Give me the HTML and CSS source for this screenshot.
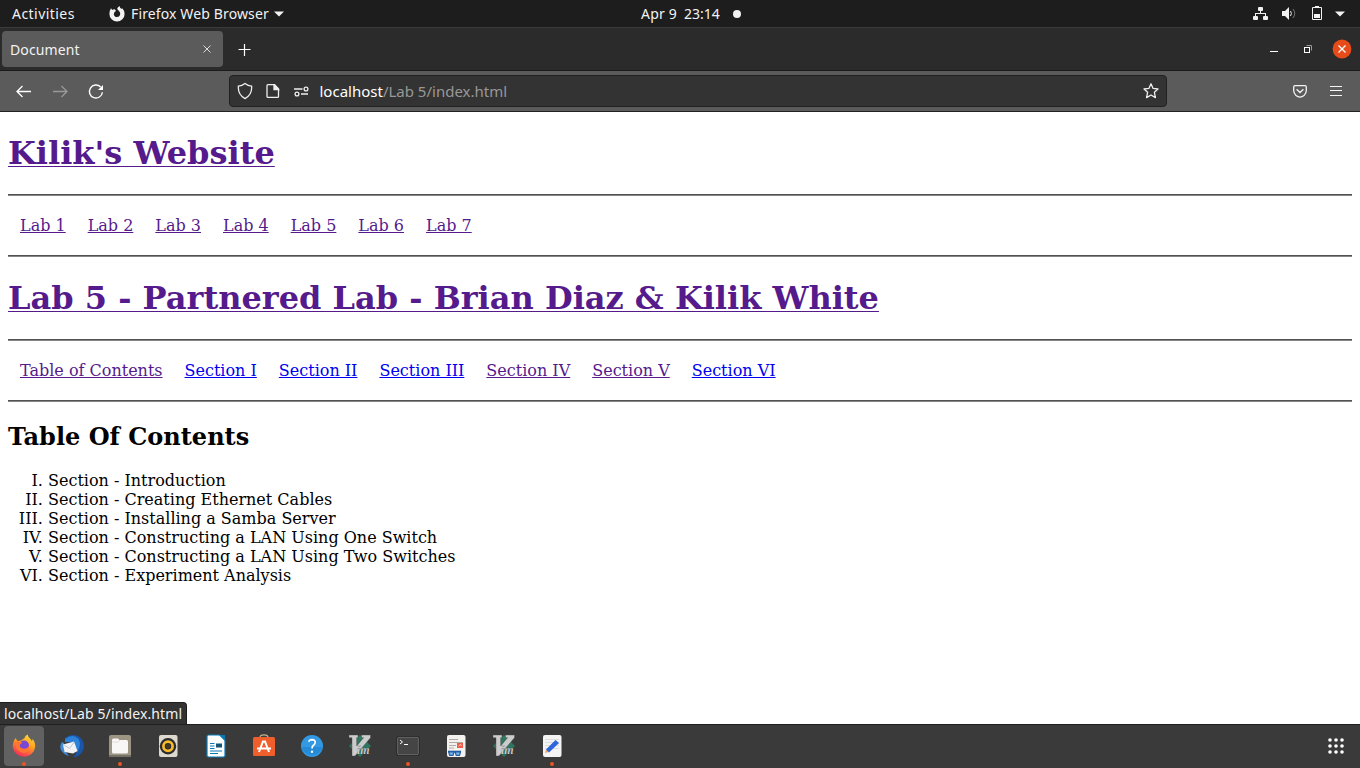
FILE: index.html
```html
<!DOCTYPE html>
<html lang="en">
<head>
<meta charset="utf-8">
<title>Document</title>
<link rel="stylesheet" href="styles.css">
</head>
<body>
<header class="topbar">
  <div class="top-left">
    <span class="activities">Activities</span>
    <svg class="fx-mono" width="16" height="16" viewBox="0 0 16 16"><path d="M2 2.2 3.2 4Q4.6 2.9 6 3.4L7 5 5.5 6 4.8 8.2Q5.2 11 8 11 11.2 10.8 11.2 7.5 11 5.6 9.3 4.2L8.2 3 8.6 1.8 10.5 0Q11 2 12.2 2.8L13.5 2.5Q15.6 4.6 15.6 8A7.6 7.6 0 0 1 .4 8Q.4 4.5 2 2.2Z" fill="#f2f2f2"/></svg>
    <span class="appname">Firefox Web Browser</span>
    <svg width="10" height="6" viewBox="0 0 10 6"><path d="M0 .5H10L5 5.5Z" fill="#f2f2f2"/></svg>
  </div>
  <div class="clock"><span class="date">Apr 9</span><span class="time">23:14</span><i class="notice"></i></div>
  <svg class="tray" width="96" height="18" viewBox="0 0 96 18"><g fill="#f2f2f2"><rect x="6" y="2" width="5" height="4" rx="1"/><rect x="1" y="11" width="5" height="4" rx="1"/><rect x="11" y="11" width="5" height="4" rx="1"/><path d="M8 6H9V8H14V11H13V9H4V11H3V8H8ZM30 6H33L37 2V15L33 11H30Z"/><path d="M61 2H63V1H67V2H69Q70 2 70 3V14Q70 15 69 15H61Q60 15 60 14V3Q60 2 61 2ZM61 3V14H69V3ZM62 9H68V13H62Z" fill-rule="evenodd"/><path d="M83 6.5H93L88 11.5Z"/></g><path d="M38.5 6Q40.3 8.5 38.5 11" fill="none" stroke="#eee"/><path d="M41 4Q44.5 8.5 41 13" fill="none" stroke="#777"/></svg>
</header>
<section class="tabs">
  <div class="tab"><span class="tab-label">Document</span><svg width="10" height="10" viewBox="0 0 10 10"><path d="M1.5 1.5 8.5 8.5M8.5 1.5 1.5 8.5" stroke="#ddd"/></svg></div>
  <svg class="plus" width="14" height="14" viewBox="0 0 14 14"><path d="M6.5 2V14M.5 7.5H12.5" stroke="#fff" stroke-width="1.2"/></svg>
  <svg class="window-buttons" width="90" height="20" viewBox="0 0 90 20"><path d="M8 12.5H16" stroke="#fff"/><path d="M44.5 6.5H49.5V11.5" fill="none" stroke="#999"/><rect x="42.5" y="8.5" width="5" height="5" fill="none" stroke="#fff"/><circle cx="80" cy="10" r="9.4" fill="#e64b19"/><path d="M76.5 6.5 83.5 13.5M83.5 6.5 76.5 13.5" stroke="#fff" stroke-width="1.3"/></svg>
</section>
<section class="toolbar">
  <svg class="nav-icons" width="96" height="20" viewBox="0 0 96 20" fill="none" stroke="#fff" stroke-width="1.3"><path d="M6.5 5 1 10.5 6.5 16M1 10.5H15"/><path d="M45.5 5 51 10.5 45.5 16M51 10.5H37" stroke="#999"/><path d="M84.6 6A6.5 6.5 0 1 0 86.4 11.2" stroke-width="1.4"/><path d="M87 4V9H82Z" fill="#fff" stroke="none"/></svg>
  <div class="urlbar">
    <svg width="72" height="20" viewBox="0 0 72 20" fill="none" stroke="#eee" stroke-width="1.3"><path d="M8 2.6Q11 4.9 14.6 5.2 15.4 13.5 8 17.6.6 13.5 1.4 5.2 5 4.9 8 2.6Z"/><path d="M31 3.7H37.5L41.5 7.7V15.4Q41.5 16.4 40.5 16.4H31Q30 16.4 30 15.4V4.7Q30 3.7 31 3.7Z"/><path d="M37 4V8.5H41.5L37.5 4Z" fill="#eee"/><circle cx="69" cy="8" r="1.9"/><path d="M57 8H65.5M64 13H71"/><circle cx="60" cy="13" r="1.9"/></svg>
    <span class="url"><b>localhost</b>/Lab 5/index.html</span>
    <svg class="star" width="18" height="18" viewBox="0 0 18 18"><path d="M9 1.8 11.1 6.4 16 7 12.4 10.3 13.4 15.6 9 13 4.6 15.6 5.6 10.3 2 7 6.9 6.4Z" fill="none" stroke="#eee" stroke-width="1.3" stroke-linejoin="round"/></svg>
  </div>
  <svg class="tool-icons" width="56" height="20" viewBox="0 0 56 20" fill="none" stroke="#f4f4f4" stroke-width="1.3"><path d="M4 4.7H14Q15.3 4.7 15.3 6V9.5Q15.3 12.4 13 14.4 9 17.7 5 14.4 2.7 12.4 2.7 9.5V6Q2.7 4.7 4 4.7ZM5.6 8.3 9 11.5 12.4 8.3" /><path d="M39 5.5H51M39 9.5H51M39 14.5H51" stroke-width="1.1"/></svg>
</section>
<main class="page">
  <h1><a class="visited">Kilik's Website</a></h1>
  <hr>
  <nav class="links labs"><a class="visited">Lab 1</a><a class="visited">Lab 2</a><a class="visited">Lab 3</a><a class="visited">Lab 4</a><a class="visited">Lab 5</a><a class="visited">Lab 6</a><a class="visited">Lab 7</a></nav>
  <hr>
  <h1><a class="visited">Lab 5 - Partnered Lab - Brian Diaz &amp; Kilik White</a></h1>
  <hr>
  <nav class="links"><a class="visited">Table of Contents</a><a>Section I</a><a>Section II</a><a>Section III</a><a class="visited">Section IV</a><a class="visited">Section V</a><a>Section VI</a></nav>
  <hr>
  <h2>Table Of Contents</h2>
  <ol>
    <li>Section - Introduction</li>
    <li>Section - Creating Ethernet Cables</li>
    <li>Section - Installing a Samba Server</li>
    <li>Section - Constructing a LAN Using One Switch</li>
    <li>Section - Constructing a LAN Using Two Switches</li>
    <li>Section - Experiment Analysis</li>
  </ol>
  <div class="status"><span class="status-text">localhost/Lab 5/index.html</span></div>
</main>
<footer class="dock">
  <div class="app active running"><svg width="24" height="24" viewBox="0 0 24 24"><defs><linearGradient id="fire" x1="0.8" y1="0" x2="0.3" y2="1"><stop offset="0" stop-color="#ffe03b"/><stop offset=".45" stop-color="#ff9a20"/><stop offset="1" stop-color="#f5255f"/></linearGradient></defs><path d="M3.5 4 5.5 7 9 6.5 12.5 4Q13 1.5 15.5.5 16 3.5 19 5.5L20 7.5 20.5 5Q23.5 8.5 23.2 13A11.3 11.3 0 0 1 .8 13Q.5 8 3.5 4Z" fill="url(#fire)"/><circle cx="12" cy="11.5" r="5" fill="#7648d5"/><path d="M3 9Q6 6.5 10.5 8.5L8 10.5Q7 14 11 14.5 15 15.5 17 12 18 18 12 19 4 18 3 9Z" fill="#ff7531"/></svg></div>
  <div class="app"><svg width="24" height="24" viewBox="0 0 24 24"><path d="M5 4Q11-1 18 2 25 6.5 23.7 14 21.5 22.5 13 23.5L17 18 16 9 6 8Z" fill="#1b55aa"/><path d="M5 5Q13-1 18.5 5 22 11 17 19L14 8 5 8Z" fill="#2b82d8"/><path d="M2 8Q-1 12 1 16 4 21 9 22L4 16 4 9Z" fill="#3c8ad9"/><path d="M3 10.5 14 7.5 17.5 17 13 19.5 4.5 18Z" fill="#f2f3f5"/><path d="M3.3 10.5 9.5 14.5 14.2 8" fill="none" stroke="#b9c4d1"/></svg></div>
  <div class="app running"><svg width="24" height="24" viewBox="0 0 24 24"><rect x="1" y="1" width="22" height="22" rx="2" fill="#9d9583"/><rect x="1" y="21" width="22" height="2" fill="#777064"/><path d="M4 6Q4 4.5 5.5 4.5H10L11.5 6H18.5Q20 6 20 7.5V18Q20 19.5 18.5 19.5H5.5Q4 19.5 4 18Z" fill="#f8f7f5"/><path d="M4 8H10L12 6" stroke="#e2ddd5" fill="none"/></svg></div>
  <div class="app"><svg width="24" height="24" viewBox="0 0 24 24"><rect x="3" y="1" width="18.5" height="22" rx="2" fill="#ded9cf"/><circle cx="12" cy="12.2" r="8.2" fill="#2b2b2b"/><circle cx="12" cy="12.2" r="4.6" fill="none" stroke="#f7bb2b" stroke-width="2.7"/><circle cx="12" cy="12.2" r="2.3" fill="#423923"/></svg></div>
  <div class="app"><svg width="24" height="24" viewBox="0 0 24 24"><path d="M4.5 1H16L21 6V21.5Q21 23 19.5 23H4.5Q3 23 3 21.5V2.5Q3 1 4.5 1Z" fill="#fff" stroke="#0879b5" stroke-width="1.2"/><path d="M15 1H21V7Z" fill="#0879b5"/><rect x="12" y="9.5" width="6" height="4" fill="#155375"/><path d="M6 9.5H10.5M6 12H10.5M6 14.5H10.5M6 17H18M6 19.5H14" stroke="#0879b5" stroke-width="1.1"/></svg></div>
  <div class="app"><svg width="24" height="24" viewBox="0 0 24 24"><path d="M8 3.5Q8 .8 12 .8 16 .8 16 3.5" stroke="#c5b197" stroke-width="1.3" fill="none"/><rect x="1" y="3" width="22" height="19" rx="1.5" fill="#f05e2c"/><path d="M7 18 11 7.5H13L17 18M5 14.5H19" fill="none" stroke="#fff" stroke-width="2"/></svg></div>
  <div class="app"><svg width="24" height="24" viewBox="0 0 24 24"><circle cx="12" cy="12" r="11" fill="#3299e2"/><path d="M1.4 13H22.6A11 11 0 0 1 1.4 13Z" fill="#258bd6"/><path d="M8.8 7.7Q9.4 5.7 12 5.7 15.3 5.8 15.2 8.5 15 10.3 13.2 11.5 12 12.4 12 14.5" stroke="#fff" stroke-width="1.7" fill="none"/><circle cx="12" cy="17.7" r="1.2" fill="#fff"/></svg></div>
  <div class="app"><svg width="24" height="24" viewBox="0 0 24 24"><path d="M12 1 23 12 12 23 1 12Z" fill="#2f7660"/><path d="M1 1H10V3.7H8.7V12L15.6 3.7H13.5V1H22.5V3.7L7 22H4V3.7H1Z" fill="#ccc" stroke="#444" stroke-width=".4"/><text class="vim" x="9" y="20">im</text></svg></div>
  <div class="app running"><svg width="24" height="24" viewBox="0 0 24 24"><rect x=".8" y="2.5" width="22.4" height="19" rx="2" fill="#454545" stroke="#252525"/><rect x="1.6" y="3.3" width="20.8" height="17.4" rx="1.5" fill="none" stroke="#777" stroke-width=".7"/><path d="M4 6 6.5 8 4 10M8 10.5H12" fill="none" stroke="#fff"/></svg></div>
  <div class="app"><svg width="24" height="24" viewBox="0 0 24 24"><rect x="3" y="1" width="18.5" height="22" rx="2" fill="#f4f2ee"/><path d="M5 5.5H14M5 8.5H19M5 11.5H12M5 14H10" stroke="#b0aca5"/><rect x="13" y="9" width="6" height="5" fill="#ef5a46"/><path d="M14.5 12Q17 9 17.5 12" fill="none" stroke="#fff" stroke-width=".7"/><path d="M4 17.5H17" stroke="#2360a4" stroke-width="1.6"/><path d="M4.7 18H10L9 21.3H5.7ZM11.2 18H16.5L15.5 21.3H12.2Z" fill="#79b5ef" stroke="#2360a4" stroke-width="1.2"/></svg></div>
  <div class="app"><svg width="24" height="24" viewBox="0 0 24 24"><path d="M12 1 23 12 12 23 1 12Z" fill="#2f7660"/><path d="M1 1H10V3.7H8.7V12L15.6 3.7H13.5V1H22.5V3.7L7 22H4V3.7H1Z" fill="#ccc" stroke="#444" stroke-width=".4"/><text class="vim" x="9" y="20">im</text></svg></div>
  <div class="app running"><svg width="24" height="24" viewBox="0 0 24 24"><rect x="3" y="1" width="18.5" height="22" rx="2" fill="#f4f4f4"/><path d="M5 5.5H19M5 8.5H19M5 11.5H19M5 14.5H19" stroke="#ddd"/><path d="M5 19 6 15.5 8.5 18Z" fill="#f4a24c"/><path d="M6 15.5 15.5 6 19 9 9 18.5Z" fill="#2e66de"/></svg></div>
  <svg class="grid" width="18" height="18" viewBox="0 0 18 18"><g fill="#fff"><circle cx="3" cy="3" r="1.8"/><circle cx="9" cy="3" r="1.8"/><circle cx="15" cy="3" r="1.8"/><circle cx="3" cy="9" r="1.8"/><circle cx="9" cy="9" r="1.8"/><circle cx="15" cy="9" r="1.8"/><circle cx="3" cy="15" r="1.8"/><circle cx="9" cy="15" r="1.8"/><circle cx="15" cy="15" r="1.8"/></g></svg>
</footer>
</body>
</html>
```
FILE: styles.css
```css
* { box-sizing: border-box; }
body { margin: 0; width: 1360px; height: 768px; overflow: hidden; display: flex; flex-direction: column; background: #fff; font: 14px "Noto Sans", sans-serif; color: #f2f2f2; }
svg { display: block; flex: none; }
.topbar { height: 27px; background: #1d1d1d; display: grid; grid-template-columns: 641px 1fr auto; align-items: center; white-space: nowrap; }
.top-left { display: flex; align-items: center; padding-left: 12px; }
.activities { width: 97px; letter-spacing: .45px; }
.appname { width: 138px; margin: 0 5px 0 6px; letter-spacing: .13px; }
.clock { display: flex; align-items: center; }
.date { width: 43px; letter-spacing: .2px; }
.time { width: 37px; letter-spacing: 0; }
.notice { width: 8px; height: 8px; border-radius: 50%; background: #f2f2f2; margin-left: 12px; }
.tray { margin-right: 12px; }
.tabs { height: 44px; display: flex; align-items: center; background: #2b2b2b; border-top: 1px solid #3b3b3b; border-bottom: 1px solid #1b1b1b; padding-left: 2px; }
.tab { width: 221px; height: 36px; border-radius: 4px; background: #5b5b5b; display: flex; align-items: center; justify-content: space-between; padding: 0 11px 0 8px; letter-spacing: .1px; }
.plus { margin-left: 15px; }
.window-buttons { margin-left: auto; margin-right: 8px; }
.toolbar { height: 41px; display: flex; align-items: center; background: #5b5b5b; border-bottom: 1px solid #222; }
.nav-icons { margin-left: 16px; }
.urlbar { width: 938px; height: 32px; margin-left: 117px; background: #333; border: 1px solid #212121; border-radius: 4px; display: flex; align-items: center; padding: 0 6px 0 7px; }
.url { margin-left: 10.5px; color: #989898; font-size: 15px; white-space: nowrap; }
.url b { color: #fff; font-weight: 400; }
.star { margin-left: auto; }
.tool-icons { margin-left: 124px; }
.page { height: 612px; padding: 0 8px; position: relative; color: #000; font: 16px/19px "DejaVu Serif", serif; }
h1 { height: 82px; margin: 0; padding-top: 22px; font-size: 32px; line-height: 38px; white-space: nowrap; }
hr { height: 2px; margin: 0; border: 0; border-top: 1px solid #525252; background: #858585; }
.links { height: 59px; padding: 20px 0 0 12px; display: flex; gap: 22px; white-space: nowrap; }
a { color: #0000ee; text-decoration: underline; text-decoration-thickness: 1px; }
h1 a { text-underline-offset: 2px; text-decoration-skip-ink: none; }
a.visited { color: #551a8b; }
h2 { height: 69px; margin: 0; padding-top: 21px; font-size: 24px; line-height: 28px; }
ol { list-style: upper-roman; margin: 0; padding-left: 40px; }
.status { position: absolute; left: 0; bottom: 0; width: 187px; height: 22px; background: #333; border: 1px solid #1e1e1e; border-width: 1px 1px 0 0; border-radius: 0 4px 0 0; color: #f2f2f2; font: 14px/22px "Noto Sans", sans-serif; letter-spacing: .12px; padding-left: 4px; white-space: nowrap; }
.dock { height: 44px; background: #3a3a3a; border-top: 1px solid #202020; display: flex; align-items: flex-start; gap: 8px; padding: 1px 0 0 4px; }
.app { position: relative; width: 40px; height: 40px; border-radius: 4px; display: grid; place-items: center; }
.active { background: #616161; }
.running::after { content: ""; position: absolute; left: 18px; bottom: 0; width: 4px; height: 4px; border-radius: 50%; background: #e95420; }
.vim { font: italic bold 12px "Liberation Serif", serif; fill: #ddd; stroke: #333; stroke-width: .25px; }
.grid { margin: 11px 15px 0 auto; }
```
